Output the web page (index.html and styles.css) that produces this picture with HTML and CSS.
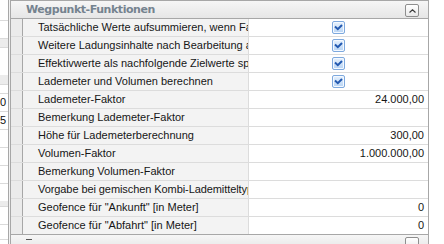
FILE: index.html
```html
<!DOCTYPE html>
<html>
<head>
<meta charset="utf-8">
<link rel="stylesheet" href="styles.css">
</head>
<body>
<div class="screen">
  <div class="side">
    <div class="srow h20"></div>
    <div class="srow h17"></div>
    <div class="srow band h8"></div>
    <div class="srow h27 noline"></div>
    <div class="srow band h9"></div>
    <div class="srow h8"></div>
    <div class="srow h17 num">0</div>
    <div class="srow h17 num">5</div>
    <div class="srow h17"></div>
    <div class="srow h17"></div>
    <div class="srow h17"></div>
    <div class="srow h17 noline"></div>
    <div class="srow band h5"></div>
    <div class="srow h17"></div>
    <div class="srow h14"></div>
    <div class="srow fill"></div>
  </div>
  <div class="splitter"></div>
  <div class="panel">
    <div class="prev-row"><div class="indent"></div><div class="name"></div><div class="value"></div></div>
    <div class="group-head">
      <span class="group-title">Wegpunkt-Funktionen</span>
      <span class="collapse"><svg width="7" height="4" viewBox="0 0 7 4"><path d="M0.5 3.5 L3.5 0.8 L6.5 3.5" fill="none" stroke="#3c3c3c" stroke-width="1.2"/></svg></span>
    </div>
    <div class="grid">
      <div class="row"><div class="indent"></div><div class="name">Tatsächliche Werte aufsummieren, wenn Fahrzeug</div><div class="value center"><span class="checkbox"><svg width="9" height="7" viewBox="0 0 9 7"><path d="M1 2.6 L3.8 5.2 L8 1" fill="none" stroke="#2359b0" stroke-width="2"/></svg></span></div></div>
      <div class="row"><div class="indent"></div><div class="name">Weitere Ladungsinhalte nach Bearbeitung anzeigen</div><div class="value center"><span class="checkbox"><svg width="9" height="7" viewBox="0 0 9 7"><path d="M1 2.6 L3.8 5.2 L8 1" fill="none" stroke="#2359b0" stroke-width="2"/></svg></span></div></div>
      <div class="row"><div class="indent"></div><div class="name">Effektivwerte als nachfolgende Zielwerte speichern</div><div class="value center"><span class="checkbox"><svg width="9" height="7" viewBox="0 0 9 7"><path d="M1 2.6 L3.8 5.2 L8 1" fill="none" stroke="#2359b0" stroke-width="2"/></svg></span></div></div>
      <div class="row"><div class="indent"></div><div class="name">Lademeter und Volumen berechnen</div><div class="value center"><span class="checkbox"><svg width="9" height="7" viewBox="0 0 9 7"><path d="M1 2.6 L3.8 5.2 L8 1" fill="none" stroke="#2359b0" stroke-width="2"/></svg></span></div></div>
      <div class="row"><div class="indent"></div><div class="name">Lademeter-Faktor</div><div class="value num">24.000,00</div></div>
      <div class="row"><div class="indent"></div><div class="name">Bemerkung Lademeter-Faktor</div><div class="value"></div></div>
      <div class="row"><div class="indent"></div><div class="name">Höhe für Lademeterberechnung</div><div class="value num">300,00</div></div>
      <div class="row"><div class="indent"></div><div class="name">Volumen-Faktor</div><div class="value num">1.000.000,00</div></div>
      <div class="row"><div class="indent"></div><div class="name">Bemerkung Volumen-Faktor</div><div class="value"></div></div>
      <div class="row"><div class="indent"></div><div class="name tight">Vorgabe bei gemischen Kombi-Lademitteltypen</div><div class="value"></div></div>
      <div class="row"><div class="indent"></div><div class="name">Geofence für "Ankunft" [in Meter]</div><div class="value num">0</div></div>
      <div class="row"><div class="indent"></div><div class="name">Geofence für "Abfahrt" [in Meter]</div><div class="value num">0</div></div>
    </div>
    <div class="group-head next">
      <span class="mark"></span>
      <span class="collapse"></span>
    </div>
  </div>
</div>
</body>
</html>
```
FILE: styles.css
```css
html, body {
  margin: 0;
  padding: 0;
}
body {
  background: #ffffff;
  font-family: "Liberation Sans", Arial, sans-serif;
  font-size: 11px;
  color: #161616;
  overflow: hidden;
}
.screen {
  display: flex;
  width: 444px;
  height: 244px;
  overflow: hidden;
}
.side {
  width: 8px;
  border-right: 1px solid #a7a7a7;
  display: flex;
  flex-direction: column;
  overflow: hidden;
  background: #ffffff;
}
.srow {
  flex: none;
  border-bottom: 1px solid #dadada;
  box-sizing: content-box;
  text-align: right;
  padding-right: 2px;
  line-height: 17px;
  white-space: nowrap;
  color: #101010;
}
.srow.noline { border-bottom: none; }
.srow.band { background: #ececec; }
.h5 { height: 5px; }
.h8 { height: 8px; }
.h9 { height: 9px; }
.h14 { height: 14px; }
.h17 { height: 17px; }
.h20 { height: 20px; }
.h27 { height: 27px; }
.srow.fill { flex: 1; border-bottom: none; }
.splitter {
  width: 1px;
  background: #f2f2f2;
}
.panel {
  width: 417px;
  border-left: 1px solid #a7a7a7;
  border-right: 1px solid #a7a7a7;
  display: flex;
  flex-direction: column;
  background: #ffffff;
}
.prev-row {
  height: 4px;
  border-bottom: 1px solid #a7a7a7;
  display: flex;
}
.indent {
  width: 11px;
  flex: none;
  border-right: 1px solid #a7a7a7;
  background: #ebebeb;
}
.name {
  width: 210px;
  flex: none;
  padding-left: 15px;
  border-right: 1px solid #dcdcdc;
  background: #f3f3f3;
  white-space: nowrap;
  overflow: hidden;
}
.name.tight { letter-spacing: -0.08px; }
.value {
  flex: 1;
  min-width: 0;
  padding-right: 4px;
  white-space: nowrap;
  overflow: hidden;
}
.value.num { text-align: right; }
.value.center {
  display: flex;
  justify-content: center;
  align-items: center;
  padding-right: 0;
}
.group-head {
  height: 17px;
  border-bottom: 1px solid #a7a7a7;
  background: linear-gradient(#f6f6f6, #e6e6e6);
  display: flex;
  justify-content: space-between;
  align-items: flex-start;
  padding: 0 9px 0 15px;
}
.group-title {
  font-family: "DejaVu Sans", Verdana, sans-serif;
  font-weight: bold;
  font-size: 11px;
  letter-spacing: -0.45px;
  color: #75838f;
  line-height: 17px;
}
.collapse {
  margin-top: 3px;
  width: 12px;
  height: 11px;
  border: 1px solid #8e8e8e;
  border-radius: 2px;
  background: linear-gradient(#ffffff, #e9e9e9);
  display: flex;
  align-items: center;
  justify-content: center;
}
.group-head.next {
  flex: 1;
  height: auto;
  border-bottom: none;
  border-top: 1px solid #a7a7a7;
}
.group-head.next .collapse { margin-top: 2px; }
.mark {
  margin-top: 4px;
  width: 6px;
  height: 1px;
  background: #555555;
}
.grid {
  display: flex;
  flex-direction: column;
}
.row {
  display: flex;
  height: 17px;
  line-height: 17px;
  border-bottom: 1px solid #dcdcdc;
}
.row:last-child { border-bottom: none; }
.checkbox {
  width: 11px;
  height: 11px;
  border: 1px solid #7ea9de;
  border-radius: 2px;
  background: linear-gradient(#e6f1fd, #b8d4f4);
  box-shadow: inset 0 0 0 1px #f4f9ff;
  display: flex;
  align-items: center;
  justify-content: center;
}
```
